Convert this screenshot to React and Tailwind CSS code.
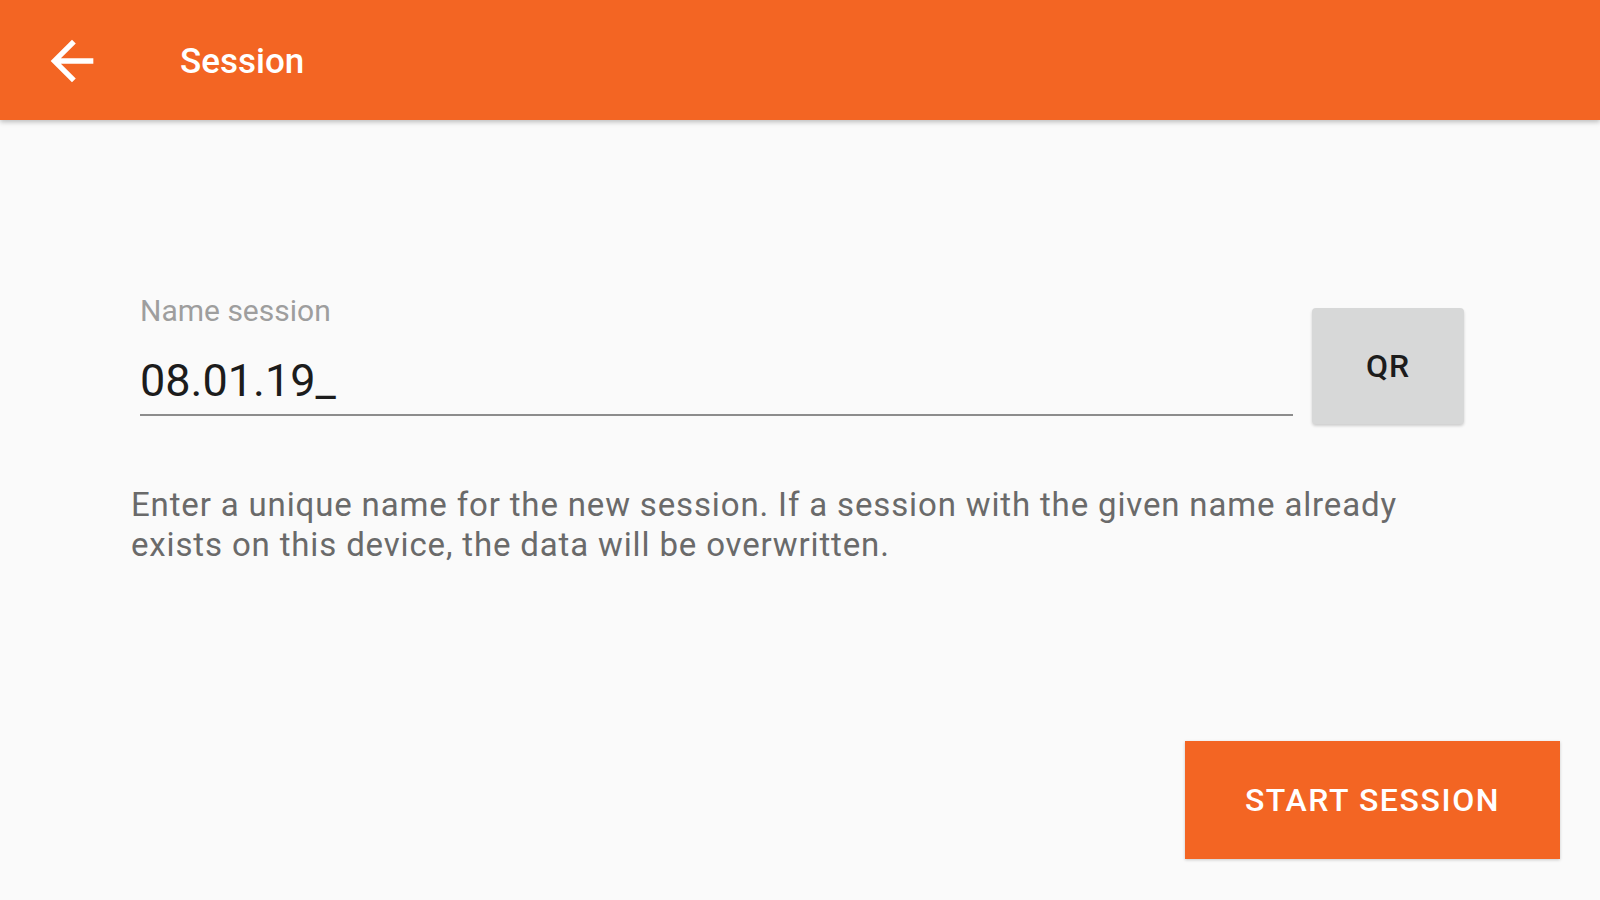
import { useState } from "react";

function BackArrow() {
  return (
    <svg viewBox="0 0 24 24" className="w-[64px] h-[64px]" fill="#ffffff">
      <path d="M20 11H7.83l5.59-5.59L12 4l-8 8 8 8 1.41-1.41L7.83 13H20v-2z" />
    </svg>
  );
}

export default function App() {
  const [name, setName] = useState("08.01.19_");

  return (
    <div className="w-[1600px] h-[900px] bg-[#fafafa] font-['Roboto',sans-serif] overflow-hidden">
      {/* toolbar */}
      <header className="h-[120px] bg-[#f36523] flex items-center shadow-[0_2px_5px_rgba(0,0,0,0.25)] relative">
        <button type="button" className="ml-[40px] mt-[2px]">
          <BackArrow />
        </button>
        <h1 className="ml-[76px] pt-[4px] text-white text-[35px] font-medium">Session</h1>
      </header>

      {/* name field */}
      <div className="mt-[176px] flex items-start pl-[140px]">
        <div className="w-[1153px]">
          <label className="block text-[30px] leading-none text-[#9e9e9e]">
            Name session
          </label>
          <input
            type="text"
            value={name}
            onChange={(e) => setName(e.target.value)}
            className="mt-[28px] w-full text-[45px] leading-none text-[#1c1c1c] bg-transparent pb-[7px] border-b-2 border-[#8c8c8c] outline-none"
          />
        </div>
        <button
          type="button"
          className="ml-[19px] mt-[12px] w-[152px] h-[116px] rounded-[4px] bg-[#d7d8d8] shadow-[0_2px_3px_rgba(0,0,0,0.18)] text-[32px] tracking-[1px] font-medium text-[#1c1c1c]"
        >
          QR
        </button>
      </div>

      <p className="mt-[61px] ml-[131px] w-[1320px] text-[33px] tracking-[0.85px] leading-[40px] text-[#6a6a6a]">
        Enter a unique name for the new session. If a session with the given name already exists on this device, the data will be overwritten.
      </p>

      <div className="mt-[176px] flex justify-end pr-[40px]">
        <button
          type="button"
          className="w-[375px] h-[118px] bg-[#f36523] text-white text-[32px] tracking-[1.6px] font-medium shadow-[0_1px_3px_rgba(0,0,0,0.2)]"
        >
          START SESSION
        </button>
      </div>
    </div>
  );
}
